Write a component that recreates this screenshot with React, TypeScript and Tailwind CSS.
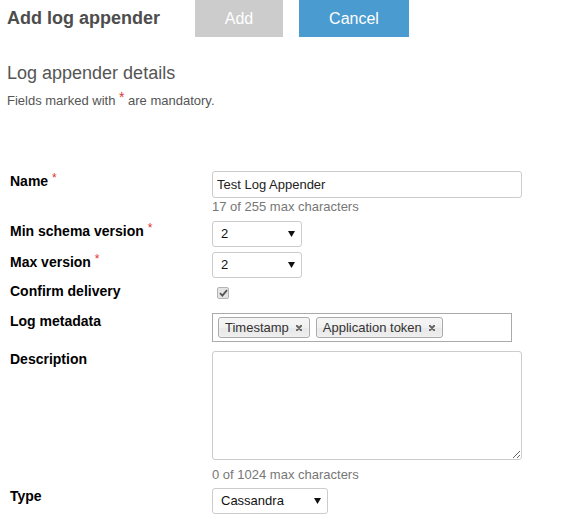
import React from "react";

function Req() {
  return <span className="relative -top-[4px] text-[12px] font-normal text-[#dd3333]">*</span>;
}

function Arrow() {
  return (
    <svg width="7" height="6" viewBox="0 0 7 6" className="shrink-0">
      <polygon points="0,0 7,0 3.5,6" fill="#111" />
    </svg>
  );
}

function SelectBox({ value, w }: { value: string; w: string }) {
  return (
    <div
      className={
        "flex h-[26px] items-center justify-between rounded-[3px] border border-[#cccccc] bg-white pl-[8px] pr-[6px] text-[13px] leading-[16px] text-[#111] " +
        w
      }
    >
      <span>{value}</span>
      <Arrow />
    </div>
  );
}

function Tag({ label }: { label: string }) {
  return (
    <div className="flex h-[21px] items-center gap-[7px] rounded-[3px] border border-[#aaaaaa] bg-[linear-gradient(#f4f4f4_20%,#f0f0f0_50%,#e8e8e8_52%,#eeeeee_100%)] pl-[6px] pr-[7px] text-[13px] leading-[16px] text-[#333] shadow-[inset_0_0_2px_#fff]">
      <span>{label}</span>
      <svg width="6" height="6" viewBox="0 0 6 6">
        <path d="M0.8 0.8 L5.2 5.2 M5.2 0.8 L0.8 5.2" stroke="#666" strokeWidth="2" strokeLinecap="round" />
      </svg>
    </div>
  );
}

function Label({ children, pt }: { children: React.ReactNode; pt: string }) {
  return (
    <div className={"w-[212px] shrink-0 pl-[10px] text-[14px] font-bold leading-[16px] text-black " + pt}>
      {children}
    </div>
  );
}

export default function App() {
  return (
    <div className="h-[521px] w-[566px] overflow-hidden bg-white font-['Liberation_Sans',Arial,sans-serif]">
      <div className="flex h-[37px]">
        <div className="w-[195px] pl-[7px] pt-[7px] text-[18px] font-bold leading-[22px] text-[#4d4d4d]">
          Add log appender
        </div>
        <div className="flex h-[37px] w-[88px] items-center justify-center bg-[#cccccc] text-[16px] text-white">
          Add
        </div>
        <div className="ml-[16px] flex h-[37px] w-[110px] items-center justify-center bg-[#4a9bcf] text-[16px] text-white">
          Cancel
        </div>
      </div>

      <div className="mt-[25px] pl-[7px] text-[18px] leading-[22px] text-[#555]">Log appender details</div>
      <div className="mt-[8px] pl-[7px] text-[13px] leading-[16px] text-[#555]">
        Fields marked with <span className="relative -top-[3px] text-[14px] text-[#dd3333]">*</span> are mandatory.
      </div>

      <div className="mt-[62px]">
        {/* Name */}
        <div className="flex">
          <Label pt="pt-[2px]">
            Name <Req />
          </Label>
          <div>
            <div className="flex h-[27px] w-[310px] items-center rounded-[3px] border border-[#cccccc] px-[4px] text-[13px] leading-[16px] text-[#222]">
              Test Log Appender
            </div>
            <div className="mt-[1px] mb-[1px] text-[13px] leading-[15px] text-[#777]">17 of 255 max characters</div>
          </div>
        </div>

        {/* Min schema version */}
        <div className="mt-[6px] flex">
          <Label pt="pt-[2px]">
            Min schema version <Req />
          </Label>
          <SelectBox value="2" w="w-[90px]" />
        </div>

        {/* Max version */}
        <div className="mt-[5px] flex">
          <Label pt="pt-[2px]">
            Max version <Req />
          </Label>
          <SelectBox value="2" w="w-[90px]" />
        </div>

        {/* Confirm delivery */}
        <div className="mt-[5px] flex">
          <Label pt="pt-0">Confirm delivery</Label>
          <div className="ml-[5px] mt-[4px] flex h-[12px] w-[12px] items-center justify-center rounded-[2px] border border-[#b4b4b4] bg-[#e4e4e4]">
            <svg width="9" height="8" viewBox="0 0 9 8">
              <path d="M1 4.2 L3.4 6.6 L8 1.2" stroke="#555" strokeWidth="1.8" fill="none" />
            </svg>
          </div>
        </div>

        {/* Log metadata */}
        <div className="mt-[14px] flex">
          <Label pt="pt-0">Log metadata</Label>
          <div className="flex h-[29px] w-[300px] items-center gap-[6px] border border-[#aaaaaa] bg-white px-[5px]">
            <Tag label="Timestamp" />
            <Tag label="Application token" />
          </div>
        </div>

        {/* Description */}
        <div className="mt-[9px] flex">
          <Label pt="pt-0">Description</Label>
          <div>
            <textarea
              readOnly
              className="block h-[109px] w-[310px] resize rounded-[3px] border border-[#cccccc] outline-none"
            />
            <div className="mt-[7px] text-[13px] leading-[15px] text-[#777]">0 of 1024 max characters</div>
          </div>
        </div>

        {/* Type */}
        <div className="mt-[6px] flex">
          <Label pt="pt-0">Type</Label>
          <SelectBox value="Cassandra" w="w-[116px]" />
        </div>
      </div>
    </div>
  );
}
